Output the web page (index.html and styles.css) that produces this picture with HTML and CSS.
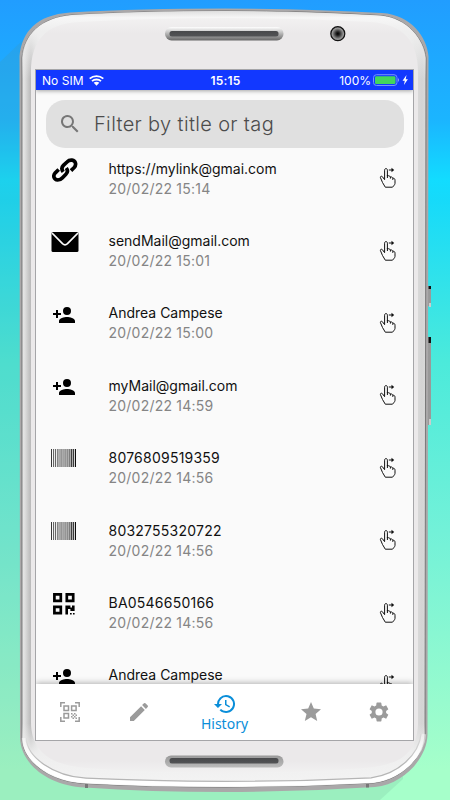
FILE: index.html
```html
<!DOCTYPE html>
<html lang="en">
<head>
<meta charset="utf-8">
<title>History</title>
<link rel="stylesheet" href="styles.css">
</head>
<body>
<svg class="symbols" width="0" height="0" aria-hidden="true">
  <symbol id="hand" viewBox="0 0 18 22">
    <path d="M5.6 12.6V3.2C5.6 1 8.4 1 8.4 3.2V9l1-.3c1 0 1.7.5 2 1.3 1.3-.3 2.1.3 2.4 1.2 1.500-.2 2.2.8 2.2 2v3.2c0 .8-.6 1.6-1.3 2.4L13.500 20.200H6.300L3.500 15.5 1.4 10.5c-.3-1.2 1.1-1.7 2-.8l2.2 3M8.4 8v3M11.4 10v1.6M13.8 11.2v1.7M9.8 3H13.500" fill="none" stroke="#111" stroke-width="1"/>
    <path d="M12.500 .8 15.200 3l-2.700 2.200z" fill="#111"/>
  </symbol>
  <symbol id="person" viewBox="0 0 24 24">
    <path d="M15 12a4 4 0 1 0 0-8 4 4 0 0 0 0 8zM6 10V7H4v3H1v2h3v3h2v-3h3v-2H6zm9 4c-2.7 0-8 1.3-8 4v2h16v-2c0-2.7-5.3-4-8-4z"/>
  </symbol>
  <symbol id="barcode" viewBox="0 0 25 18">
    <path d="M.5 0v18M6.9 0v18M20.5 0v18M22.5 0v18" stroke="#222" stroke-width=".9"/>
    <path d="M24.4 0v18" stroke="#000" stroke-width="1.1"/>
    <path d="M2.6 0v18M4.6 0v18M9 0v18M10.9 0v18M13 0v18M14.9 0v18M16.8 0v18M18.7 0v18" stroke="#555" stroke-width="1"/>
    <path d="M12 0v18M16 0v18M17.8 0v18M19.6 0v18M21.5 0v18" stroke="#999" stroke-width=".8"/>
  </symbol>
</svg>
<svg class="device" viewBox="0 0 450 800" aria-hidden="true">
  <defs>
    <linearGradient id="edge" x1="20" x2="428" y1="0" y2="0" gradientUnits="userSpaceOnUse">
      <stop offset="0" stop-color="#f1f1f1"/><stop offset=".012" stop-color="#dedede"/><stop offset=".022" stop-color="#c4c4c4"/>
      <stop offset=".027" stop-color="#b9b9b9"/><stop offset=".05" stop-color="#eee"/><stop offset=".95" stop-color="#eee"/>
      <stop offset=".965" stop-color="#dedede"/><stop offset=".985" stop-color="#d4d4d4"/><stop offset="1" stop-color="#ddd"/>
    </linearGradient>
    <linearGradient id="caps" x1="0" x2="0" y1="8" y2="794" gradientUnits="userSpaceOnUse">
      <stop offset="0" stop-color="#d5d5d5"/><stop offset=".012" stop-color="#f6f6f6"/><stop offset=".03" stop-color="#eee"/><stop offset=".09" stop-color="#eee" stop-opacity="0"/>
      <stop offset=".91" stop-color="#eee" stop-opacity="0"/><stop offset=".95" stop-color="#eee"/><stop offset="1" stop-color="#f5f5f5"/>
    </linearGradient>
    <linearGradient id="lowerRim" x1="0" x2="0" y1="715" y2="760" gradientUnits="userSpaceOnUse">
      <stop offset="0" stop-color="#fff" stop-opacity="0"/><stop offset="1" stop-color="#fff"/>
    </linearGradient>
    <linearGradient id="lowerLine" x1="0" x2="0" y1="730" y2="765" gradientUnits="userSpaceOnUse">
      <stop offset="0" stop-color="#b5b5b5" stop-opacity="0"/><stop offset="1" stop-color="#b5b5b5"/>
    </linearGradient>
    <linearGradient id="face" x1="0" x2="0" y1="18" y2="776" gradientUnits="userSpaceOnUse">
      <stop offset="0" stop-color="#f2f1f1"/><stop offset=".02" stop-color="#ebe9ea"/><stop offset=".98" stop-color="#ebe9ea"/><stop offset="1" stop-color="#f3f3f3"/>
    </linearGradient>
    <linearGradient id="slot" x1="0" x2="0" y1="0" y2="1">
      <stop offset="0" stop-color="#fff"/><stop offset=".45" stop-color="#bbb"/><stop offset="1" stop-color="#666"/>
    </linearGradient>
    <linearGradient id="slotLow" x1="0" x2="0" y1="0" y2="1">
      <stop offset="0" stop-color="#999"/><stop offset="1" stop-color="#bbb"/>
    </linearGradient>
    <linearGradient id="mesh" x1="0" x2="0" y1="0" y2="1">
      <stop offset="0" stop-color="#48494b"/><stop offset="1" stop-color="#525355"/>
    </linearGradient>
    <radialGradient id="lens"><stop offset="0" stop-color="#000"/><stop offset=".25" stop-color="#222"/><stop offset=".8" stop-color="#999"/><stop offset="1" stop-color="#777"/></radialGradient>
  </defs>
  <path d="M24 39 0 62V800H380L403 779V60Z" fill="#5a8c80" fill-opacity=".14"/>
  <path d="M427 286h4v20h-4zM427 337h4v88h-4z" fill="#999"/>
  <path d="M428.500 286h2.500v3h-2.500zM428.500 337h2.500v6h-2.500z" fill="#111"/>
  <path d="M429 303h2v4h-2zM429 419h2v6h-2z" fill="#ccc"/>
  <path d="M19.500 56C22 32 36 15 70 12.500Q140 8.500 225 8.500T382 13C412 15 427 38 428.500 56L427.500 735C427 757 405 784 375 787Q300 792 225 792T85 787.500C48 786 21 764 20 738Z" fill="#aaa8a9"/>
  <path d="M22 58C24 35 40 18 72 15Q140 11 225 11T380 15.500C408 18 424 40 426 58L425 734C424 756 402 780 373 783Q300 787 225 787T86 783.500C50 782 23 762 22 738Z" fill="url(#edge)" stroke="#666" stroke-width=".8"/>
  <path d="M22 58C24 35 40 18 72 15Q140 11 225 11T380 15.500C408 18 424 40 426 58L425 734C424 756 402 780 373 783Q300 787 225 787T86 783.500C50 782 23 762 22 738Z" fill="url(#caps)"/>
  <path d="M24 738C25 759 51 779 86 780.800Q150 784 225 784T372 780.500C401 777 422 755 424 734" fill="none" stroke="url(#lowerRim)" stroke-width="4.500"/>
  <path d="M26 738C27 757 53 776 86 778.200Q150 781.300 225 781.300T371 777.800C399 774 419 754 421 734" fill="none" stroke="url(#lowerLine)" stroke-width="1.200"/>
  <path d="M31 72C31 42 45 23 80 22Q150 18 225 18T370 22C404 24 418 42 418 72V724C417 752 402 765 365 768Q300 773 225 773T86 768C49 765 31 750 31 722Z" fill="url(#face)"/>
  <path d="M86.500 784v4M367.500 784v3.500" stroke="#777" stroke-width="3"/>
  <rect x="165" y="27" width="118.500" height="13.500" rx="6.500" fill="url(#slot)"/>
  <rect x="169.500" y="31" width="109" height="5.500" rx="2.500" fill="url(#mesh)"/>
  <rect x="165" y="755.500" width="118.500" height="12" rx="6" fill="url(#slotLow)"/>
  <rect x="169.500" y="758" width="109" height="5.500" rx="2.500" fill="url(#mesh)"/>
  <circle cx="337.800" cy="33.700" r="7" fill="url(#lens)" stroke="#111" stroke-width="1.200"/>
</svg>

<main class="screen">
  <header class="status">
    <div class="status-side"><span class="carrier">No SIM</span>
      <svg width="15" height="11" viewBox="0 0 15 11"><path d="M.7 3.700C4.500.2 10.500.2 14.300 3.700M3 6.200c2.500-2.300 6.500-2.300 9 0" fill="none" stroke="#fff" stroke-width="1.800"/><path d="M4.700 7.800c1.600-1.400 4-1.400 5.600 0L7.500 10.800z" fill="#fff"/></svg>
    </div>
    <span class="time">15:15</span>
    <div class="status-side right"><span class="percent">100%</span>
      <svg width="36" height="12" viewBox="0 0 36 12"><rect x=".5" y=".7" width="23.500" height="10.800" rx="3" fill="none" stroke="#7592ff"/><rect x="2" y="2.200" width="20.500" height="7.800" rx="1.300" fill="#43d65c"/><path d="M25 4q2 2 0 4z" fill="#8ba2ff"/><path d="M33.500 1 29.500 6.700h2.300L30.900 11l4-5.700h-2.200z" fill="#fff"/></svg>
    </div>
  </header>
  <label class="search">
    <svg width="24" height="24" viewBox="0 0 24 24" fill="#777"><path d="M15.500 14h-.8l-.3-.3A6.500 6.500 0 1 0 13.700 14.400l.3.300v.8l5 5 1.500-1.500zM9.500 14a4.500 4.500 0 1 1 0-9 4.500 4.500 0 0 1 0 9z"/></svg>
    <span>Filter by title or tag</span>
  </label>
  <section class="list">
    <article class="row"><div class="kind"><svg class="link" width="26" height="26" viewBox="0 0 26 26"><g fill="none" stroke="#000" stroke-width="3.700" stroke-linejoin="round"><path d="M11.200 14.900C9.200 12.200 9.600 10.200 11.400 8.400L15 5C16.800 3.200 18 3 20 3.200C24 3.800 24.500 8 22.200 10.500L19 13.600"/><path d="M14.300 11C16.300 13.700 15.700 15.500 13.900 17.300L10.500 20.800C9 22.500 7.500 23 5.800 23C1.500 22.500 .8 18.500 3.300 15.800L6.700 12.500"/></g></svg></div><div class="text"><h2>https://mylink@gmai.com</h2><p>20/02/22 15:14</p></div><svg class="hand"><use href="#hand"/></svg></article>
    <article class="row"><div class="kind"><svg class="mail" width="28" height="20" viewBox="0 0 28 20"><rect x=".5" width="27" height="20" rx="1.500"/><path d="M1 1 11.500 11.700Q14 14 16.500 11.700L27 1" fill="none" stroke="#fafafa" stroke-width="1.700"/></svg></div><div class="text"><h2>sendMail@gmail.com</h2><p>20/02/22 15:01</p></div><svg class="hand"><use href="#hand"/></svg></article>
    <article class="row"><div class="kind"><svg class="person"><use href="#person"/></svg></div><div class="text"><h2 class="name">Andrea Campese</h2><p>20/02/22 15:00</p></div><svg class="hand"><use href="#hand"/></svg></article>
    <article class="row"><div class="kind"><svg class="person"><use href="#person"/></svg></div><div class="text"><h2>myMail@gmail.com</h2><p>20/02/22 14:59</p></div><svg class="hand"><use href="#hand"/></svg></article>
    <article class="row"><div class="kind"><svg class="barcode"><use href="#barcode"/></svg></div><div class="text"><h2 class="code">8076809519359</h2><p>20/02/22 14:56</p></div><svg class="hand"><use href="#hand"/></svg></article>
    <article class="row"><div class="kind"><svg class="barcode"><use href="#barcode"/></svg></div><div class="text"><h2 class="code">8032755320722</h2><p>20/02/22 14:56</p></div><svg class="hand"><use href="#hand"/></svg></article>
    <article class="row"><div class="kind"><svg class="qr" width="22" height="22" viewBox="0 0 22 22"><g fill="none" stroke="#000" stroke-width="2.700"><path d="M1.400 1.400h6.400v6.400H1.400zM13.800 1.400h6.400v6.400h-6.400zM1.400 13.800h6.400v6.400H1.400z"/></g><path d="M12.400 12.400h5v2h1.600v-2h2.600v5.500h-4.200v-2h-2.400v5.700h-2.600zM17 20h1.700v1.600H17zM20 20h1.600v1.600H20z"/></svg></div><div class="text"><h2 class="code">BA0546650166</h2><p>20/02/22 14:56</p></div><svg class="hand"><use href="#hand"/></svg></article>
    <article class="row"><div class="kind"><svg class="person"><use href="#person"/></svg></div><div class="text"><h2 class="name">Andrea Campese</h2></div><svg class="hand"><use href="#hand"/></svg></article>
  </section>
  <nav class="tabs">
    <a class="tab"><svg width="20" height="20" viewBox="0 0 20 20"><g fill="none" stroke="#9b9b9b" stroke-width="1.500"><path d="M.8 5V.8H5M15 .8h4.200V5M19.200 15v4.200H15M5 19.200H.8V15M4 4h4.500v4.500H4zM11.600 4h4.500v4.500h-4.500zM4 11.600h4.500v4.500H4z"/></g><path d="M11 11h1.500v1.500H11zM14 11h1.500v1.500H14zM12.500 12.500H14V14h-1.500zM15.500 12.500H17V14h-1.500zM11 14h1.500v1.500H11zM14 14h1.500v1.500H14zM12.500 15.500H14V17h-1.500zM15.500 15.500H17V17h-1.500z" fill="#9b9b9b"/></svg></a>
    <a class="tab"><svg width="24" height="24" viewBox="0 0 24 24" fill="#9b9b9b"><path d="M3 17.200V21h3.800L17.800 9.900 14.100 6.200zM20.700 7a1 1 0 0 0 0-1.400l-2.300-2.300a1 1 0 0 0-1.400 0l-1.900 1.800 3.800 3.800z"/></svg></a>
    <a class="tab active"><svg width="24" height="22" viewBox="0 1 24 22" fill="#0a8ed9"><path d="M13 3a9 9 0 0 0-9 9H1l3.900 3.900.1.100L9 12H6a7 7 0 1 1 2 4.900l-1.400 1.400A9 9 0 1 0 13 3zm-1 5v5l4.300 2.500.7-1.200-3.500-2.100V8z"/></svg><span>History</span></a>
    <a class="tab"><svg width="24" height="24" viewBox="0 0 24 24" fill="#9b9b9b"><path d="m12 17.300 6.200 3.700-1.600-7L22 9.200l-7.200-.6L12 2 9.200 8.600 2 9.200 7.500 14l-1.700 7z"/></svg></a>
    <a class="tab"><svg width="24" height="24" viewBox="0 0 24 24" fill="#9b9b9b"><path d="M19.100 12.900a7 7 0 0 0 0-1.800l2-1.600a.5.500 0 0 0 .1-.6l-1.900-3.300a.5.500 0 0 0-.6-.2l-2.400 1a7 7 0 0 0-1.600-1l-.4-2.500a.5.500 0 0 0-.5-.4h-3.800a.5.500 0 0 0-.5.400l-.3 2.500a7 7 0 0 0-1.700 1l-2.300-1a.5.500 0 0 0-.6.200L2.700 8.900a.5.500 0 0 0 .1.600l2 1.600a7 7 0 0 0 0 1.800l-2 1.600a.5.500 0 0 0-.1.600l1.900 3.300c.1.200.4.300.6.200l2.400-1a7 7 0 0 0 1.600 1l.4 2.500c0 .2.200.4.500.4h3.800c.2 0 .5-.2.500-.4l.3-2.500a7 7 0 0 0 1.700-1l2.300 1c.2.100.5 0 .6-.2l1.900-3.300a.5.500 0 0 0-.1-.6zM12 15.600a3.600 3.600 0 1 1 0-7.200 3.600 3.600 0 0 1 0 7.200z"/></svg></a>
  </nav>
</main>
</body>
</html>
```
FILE: styles.css
```css
* { box-sizing: border-box; }
body {
  margin: 0;
  width: 450px;
  height: 800px;
  overflow: hidden;
  padding: 69px 0 0 35px;
  font-family: Inter, "Liberation Sans", sans-serif;
  background: linear-gradient(#219dff 0, #1bb5ff 120px, #12dcff 180px, #16dafa 200px, #4beadb 360px, #72f1d8 530px, #a6ffca 770px, #a6ffca 800px);
}
.symbols { position: absolute; }
.device { position: absolute; inset: 0; width: 450px; height: 800px; }
.screen {
  position: relative;
  width: 379px;
  height: 672px;
  border: 1px solid #a5a5a8;
  background: #fafafa;
  display: flex;
  flex-direction: column;
  overflow: hidden;
}
.status {
  flex: none;
  height: 20px;
  padding: 0 4px 0 6px;
  display: grid;
  grid-template-columns: 1fr auto 1fr;
  align-items: center;
  background: #1238ff;
  color: #fff;
  font-size: 12px;
  box-shadow: 0 1px 4px rgba(0, 0, 0, .35);
}
.status-side { display: flex; align-items: center; gap: 5px; }
.right { justify-content: flex-end; gap: 2px; }
.carrier { letter-spacing: .05px; }
.time { font-weight: 600; letter-spacing: .2px; }
.search {
  flex: none;
  height: 48px;
  margin: 10px 9px 0 10px;
  padding-left: 12px;
  border-radius: 19px;
  background: #e0e0e0;
  display: flex;
  align-items: center;
  gap: 12px;
  color: #4c4c4c;
  font-size: 20px;
  font-weight: 300;
  letter-spacing: .35px;
}
.list { flex: 1; min-height: 0; overflow: hidden; }
.row {
  height: 72.4px;
  padding: 10.6px 16.5px 0 15px;
  display: grid;
  grid-template-columns: 57.5px 1fr 18px;
  align-items: start;
}
.kind svg { display: block; }
.link { margin: -1.5px 0 0 .5px; }
.mail { margin-top: 1px; }
.person { width: 24px; height: 24px; margin: -.7px 0 0 .6px; }
.barcode { width: 25px; height: 18px; margin-top: 1px; }
.qr { margin: .2px 0 0 2px; }
.text h2 {
  margin: 0;
  font-size: 14px;
  line-height: 20px;
  font-weight: 400;
  letter-spacing: 0;
  color: #111;
}
.text .name { letter-spacing: 0; }
.text .code { letter-spacing: .23px; }
.text p {
  margin: 0;
  font-size: 14px;
  line-height: 20px;
  letter-spacing: .22px;
  color: #858585;
}
.hand { width: 18px; height: 22px; margin-top: 8.6px; }
.tabs {
  position: relative;
  flex: none;
  height: 56px;
  display: grid;
  grid-template-columns: 68px 69px 103px 69px 68px;
  background: #fff;
  box-shadow: 0 -1px 6px rgba(0, 0, 0, .3);
}
.tab { display: flex; flex-direction: column; align-items: center; justify-content: center; }
.active {
  color: #0a8ed9;
  font-family: "Noto Sans", sans-serif;
  font-size: 14px;
  line-height: 17px;
}
```
